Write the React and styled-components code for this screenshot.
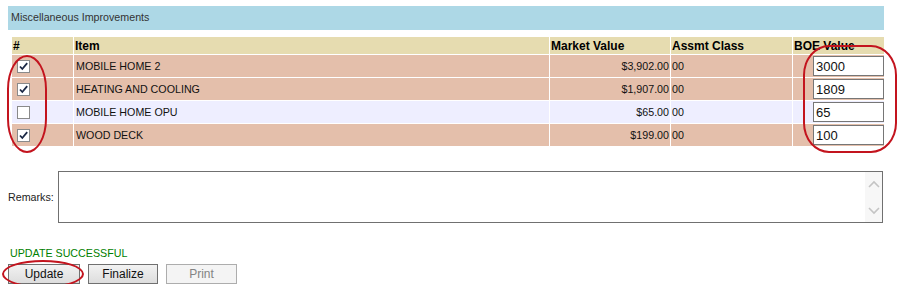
import React from "react";
import styled, { createGlobalStyle } from "styled-components";

const GlobalStyle = createGlobalStyle`
  html, body { margin: 0; padding: 0; background: #fff; }
  body { font-family: "Liberation Sans", Arial, sans-serif; }
`;

const Page = styled.div`
  position: relative;
  width: 876px;
  padding: 6px 0 0 8px;
`;

const SectionBar = styled.div`
  height: 24px;
  line-height: 23px;
  background: #add8e6;
  color: #333;
  font-size: 10.7px;
  padding-left: 3px;
`;

const Table = styled.table`
  margin: 6px 0 0 3px;
  width: 874px;
  border-collapse: separate;
  border-spacing: 1px;
  table-layout: fixed;
  font-size: 10.7px;
  color: #111;
`;

const HeadCell = styled.th`
  height: 17px;
  padding: 0 1px;
  background: #e6dcb0;
  font-size: 12px;
  font-weight: bold;
  text-align: left;
  color: #000;
  vertical-align: middle;
  white-space: nowrap;
`;

const Row = styled.tr`
  background: ${(p) => (p.$alt ? "#eeeeff" : "#e4bfab")};
`;

const Cell = styled.td`
  height: 22px;
  padding: ${(p) => (p.$pad ? p.$pad : "0 2px")};
  text-align: ${(p) => (p.$align ? p.$align : "left")};
  vertical-align: middle;
  white-space: nowrap;
  overflow: visible;
`;

const CheckBox = styled.span`
  display: block;
  width: 11px;
  height: 11px;
  margin-left: 4px;
  border: 1px solid #8a8a8a;
  background: #fff;
  position: relative;
  svg { position: absolute; left: 0; top: 0; }
`;

const ValueInput = styled.input`
  box-sizing: border-box;
  display: inline-block;
  width: 71px;
  height: 20px;
  margin: 0;
  padding: 0 2px;
  border: 1px solid #767676;
  background: #fff;
  font-family: "Liberation Sans", Arial, sans-serif;
  font-size: 13px;
  color: #111;
  outline: none;
  vertical-align: middle;
`;

const RemarksRow = styled.div`
  display: flex;
  align-items: center;
  gap: 3px;
  margin-top: 24px;
`;

const Label = styled.span`
  font-size: 10.7px;
  color: #222;
  width: 47px;
`;

const FakeTextArea = styled.div`
  box-sizing: border-box;
  display: flex;
  width: 825px;
  height: 52px;
  border: 1px solid #707070;
  background: #fff;
`;

const TextZone = styled.div`
  flex: 1;
`;

const ScrollTrack = styled.div`
  width: 17px;
  background: #f7f7f7;
  display: flex;
  flex-direction: column;
  align-items: center;
  justify-content: space-between;
  padding: 8px 0 7px;
`;

const Status = styled.div`
  margin-top: 24px;
  padding-left: 2px;
  font-size: 10.7px;
  line-height: 13px;
  color: #008000;
`;

const Buttons = styled.div`
  display: flex;
  gap: 8px;
  margin-top: 4px;
`;

const Button = styled.button`
  box-sizing: border-box;
  width: ${(p) => p.$w}px;
  height: 20px;
  margin: 0;
  padding: 0;
  font-family: "Liberation Sans", Arial, sans-serif;
  font-size: 12px;
  color: ${(p) => (p.disabled ? "#838383" : "#111")};
  border: 1px solid ${(p) => (p.disabled ? "#adadad" : "#707070")};
  background: ${(p) =>
    p.disabled ? "#f4f4f4" : "linear-gradient(#f2f2f2, #dddddd)"};
  border-radius: 0;
`;

const Annotation = styled.div`
  position: absolute;
  left: ${(p) => p.$x}px;
  top: ${(p) => p.$y}px;
  width: ${(p) => p.$w}px;
  height: ${(p) => p.$h}px;
  box-sizing: border-box;
  border: 2px solid #c3141e;
  border-radius: ${(p) => p.$r};
  pointer-events: none;
`;

const Check = () => (
  <svg width="11" height="11" viewBox="0 0 11 11">
    <path d="M2 5.5 L4.3 8 L9.2 2.2" fill="none" stroke="#1b2845" strokeWidth="1.8" />
  </svg>
);

const Chevron = ({ up }) => (
  <svg width="12" height="8" viewBox="0 0 12 8">
    <path
      d={up ? "M1 7 L6 2 L11 7" : "M1 1 L6 6 L11 1"}
      fill="none"
      stroke="#c4c4c4"
      strokeWidth="1.6"
    />
  </svg>
);

const rows = [
  { checked: true, item: "MOBILE HOME 2", mv: "$3,902.00", cls: "00", boe: "3000" },
  { checked: true, item: "HEATING AND COOLING", mv: "$1,907.00", cls: "00", boe: "1809" },
  { checked: false, item: "MOBILE HOME OPU", mv: "$65.00", cls: "00", boe: "65", alt: true },
  { checked: true, item: "WOOD DECK", mv: "$199.00", cls: "00", boe: "100" },
];

export default function App() {
  return (
    <>
      <GlobalStyle />
      <Page>
        <SectionBar>Miscellaneous Improvements</SectionBar>
        <Table>
          <colgroup>
            <col style={{ width: 61 }} />
            <col style={{ width: 475 }} />
            <col style={{ width: 120 }} />
            <col style={{ width: 121 }} />
            <col style={{ width: 91 }} />
          </colgroup>
          <thead>
            <tr>
              <HeadCell>#</HeadCell>
              <HeadCell>Item</HeadCell>
              <HeadCell>Market Value</HeadCell>
              <HeadCell>Assmt Class</HeadCell>
              <HeadCell>BOE Value</HeadCell>
            </tr>
          </thead>
          <tbody>
            {rows.map((r) => (
              <Row key={r.item} $alt={r.alt}>
                <Cell $pad="0 1px">
                  <CheckBox>{r.checked && <Check />}</CheckBox>
                </Cell>
                <Cell>{r.item}</Cell>
                <Cell $align="right" $pad="0 1px">{r.mv}</Cell>
                <Cell $pad="0 1px">{r.cls}</Cell>
                <Cell $align="right" $pad="0">
                  <ValueInput defaultValue={r.boe} />
                </Cell>
              </Row>
            ))}
          </tbody>
        </Table>
        <RemarksRow>
          <Label>Remarks:</Label>
          <FakeTextArea>
            <TextZone />
            <ScrollTrack>
              <Chevron up />
              <Chevron />
            </ScrollTrack>
          </FakeTextArea>
        </RemarksRow>
        <Status>UPDATE SUCCESSFUL</Status>
        <Buttons>
          <Button $w={72}>Update</Button>
          <Button $w={70}>Finalize</Button>
          <Button $w={71} disabled>Print</Button>
        </Buttons>
        <Annotation $x={7} $y={55} $w={40} $h={98} $r="20px / 34px" />
        <Annotation $x={803} $y={45} $w={94} $h={108} $r="26px / 30px" />
        <Annotation $x={2} $y={260} $w={82} $h={28} $r="50%" />
      </Page>
    </>
  );
}
